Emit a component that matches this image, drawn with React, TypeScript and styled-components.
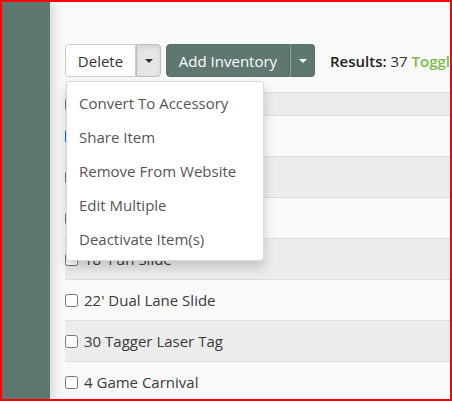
import styled, { createGlobalStyle } from "styled-components";

const GlobalStyle = createGlobalStyle`
  body {
    margin: 0;
    font-family: "Open Sans", "Liberation Sans", sans-serif;
    font-size: 15px;
  }
  * {
    box-sizing: border-box;
  }
`;

const bulkActions = [
  "Convert To Accessory",
  "Share Item",
  "Remove From Website",
  "Edit Multiple",
  "Deactivate Item(s)",
];

const items = [
  { name: "10' Bounce House", checked: true },
  { name: "13' Castle Combo", checked: false },
  { name: "15' Wet Slide", checked: false },
  { name: "18' Fun Slide", checked: false },
  { name: "22' Dual Lane Slide", checked: false },
  { name: "30 Tagger Laser Tag", checked: false },
  { name: "4 Game Carnival", checked: false },
];

const App = () => {
  return (
    <>
      <GlobalStyle />
      <Frame>
        <Sidebar />
        <Main>
          <Toolbar>
            <BtnGroup>
              <Btn>Delete</Btn>
              <CaretBtn $active>
                <Caret />
              </CaretBtn>
              <Menu>
                {bulkActions.map((a) => (
                  <MenuItem key={a}>{a}</MenuItem>
                ))}
              </Menu>
            </BtnGroup>
            <BtnGroup>
              <Btn $primary>Add Inventory</Btn>
              <CaretBtn $primary>
                <Caret $light />
              </CaretBtn>
            </BtnGroup>
            <Results>
              <b>Results:</b> 37 <Toggle>Toggle Columns</Toggle>
            </Results>
          </Toolbar>

          <Table>
            <HeadRow>
              <Check type="checkbox" readOnly />
            </HeadRow>
            {items.map((item, i) => (
              <Row key={item.name} $odd={i % 2 === 1}>
                <Check type="checkbox" defaultChecked={item.checked} />
                {item.name}
              </Row>
            ))}
          </Table>
        </Main>
      </Frame>
    </>
  );
};

const Frame = styled.div`
  width: 452px;
  height: 401px;
  border: 2px solid #ff0000;
  display: flex;
  overflow: hidden;
`;

const Sidebar = styled.aside`
  width: 48px;
  flex-shrink: 0;
  background: #5e7771;
  box-shadow: 3px 0 10px rgba(0, 0, 0, 0.16);
  position: relative;
  z-index: 1;
`;

const Main = styled.main`
  flex: 1;
  min-width: 0;
  background: #f9f9f9;
  padding: 42px 0 0 15px;
  overflow: hidden;
`;

const Toolbar = styled.div`
  display: flex;
  align-items: center;
  gap: 5px;
  height: 33px;
`;

const BtnGroup = styled.div`
  position: relative;
  display: flex;
  flex-shrink: 0;
  height: 33px;
`;

const Btn = styled.button<{ $primary?: boolean }>`
  font-family: inherit;
  font-size: 15px;
  height: 100%;
  width: ${(p) => (p.$primary ? "124px" : "71px")};
  padding: 0;
  white-space: nowrap;
  border: 1px solid ${(p) => (p.$primary ? "#587069" : "#cccccc")};
  border-radius: 4px 0 0 4px;
  background: ${(p) => (p.$primary ? "#5e7771" : "#ffffff")};
  color: ${(p) => (p.$primary ? "#ffffff" : "#333333")};
  cursor: pointer;
`;

const CaretBtn = styled.button<{ $primary?: boolean; $active?: boolean }>`
  width: 25px;
  height: 100%;
  padding: 0;
  display: flex;
  align-items: center;
  justify-content: center;
  border: 1px solid ${(p) => (p.$primary ? "#587069" : "#bdbdbd")};
  border-left: 1px solid
    ${(p) => (p.$primary ? "rgba(255, 255, 255, 0.3)" : "#bdbdbd")};
  border-radius: 0 4px 4px 0;
  background: ${(p) =>
    p.$primary ? "#5e7771" : p.$active ? "#e6e6e6" : "#ffffff"};
  box-shadow: ${(p) =>
    p.$active ? "inset 0 3px 5px rgba(0, 0, 0, 0.08)" : "none"};
  cursor: pointer;
`;

const Caret = styled.span<{ $light?: boolean }>`
  width: 0;
  height: 0;
  border-top: 4px solid ${(p) => (p.$light ? "#ffffff" : "#333333")};
  border-left: 4px solid transparent;
  border-right: 4px solid transparent;
`;

const Menu = styled.ul`
  position: absolute;
  top: calc(100% + 4px);
  left: 1px;
  width: 198px;
  margin: 0;
  padding: 4px 0;
  list-style: none;
  background: #ffffff;
  border: 1px solid rgba(0, 0, 0, 0.15);
  border-radius: 4px;
  box-shadow: 0 6px 12px rgba(0, 0, 0, 0.175);
  z-index: 10;
`;

const MenuItem = styled.li`
  height: 34px;
  line-height: 34px;
  padding: 0 12px;
  color: #555555;
  white-space: nowrap;
  cursor: pointer;
`;

const Results = styled.div`
  margin-left: 10px;
  flex-shrink: 0;
  white-space: nowrap;
  color: #333333;

  b {
    font-weight: 600;
    color: #222222;
  }
`;

const Toggle = styled.span`
  color: #7cba4a;
  font-weight: 600;
`;

const Table = styled.div`
  margin-top: 15px;
  width: 420px;
`;

const HeadRow = styled.div`
  height: 24px;
  display: flex;
  align-items: center;
  background: #ececec;
  border-top: 1px solid #dddddd;
  border-bottom: 1px solid #dddddd;
`;

const Row = styled.div<{ $odd: boolean }>`
  height: 41px;
  display: flex;
  align-items: center;
  gap: 6px;
  background: ${(p) => (p.$odd ? "#ececec" : "#f9f9f9")};
  border-bottom: 1px solid #dddddd;
  color: #3a3a3a;
  white-space: nowrap;
`;

const Check = styled.input`
  width: 13px;
  height: 13px;
  margin: 0;
  flex-shrink: 0;
`;

export default App;
